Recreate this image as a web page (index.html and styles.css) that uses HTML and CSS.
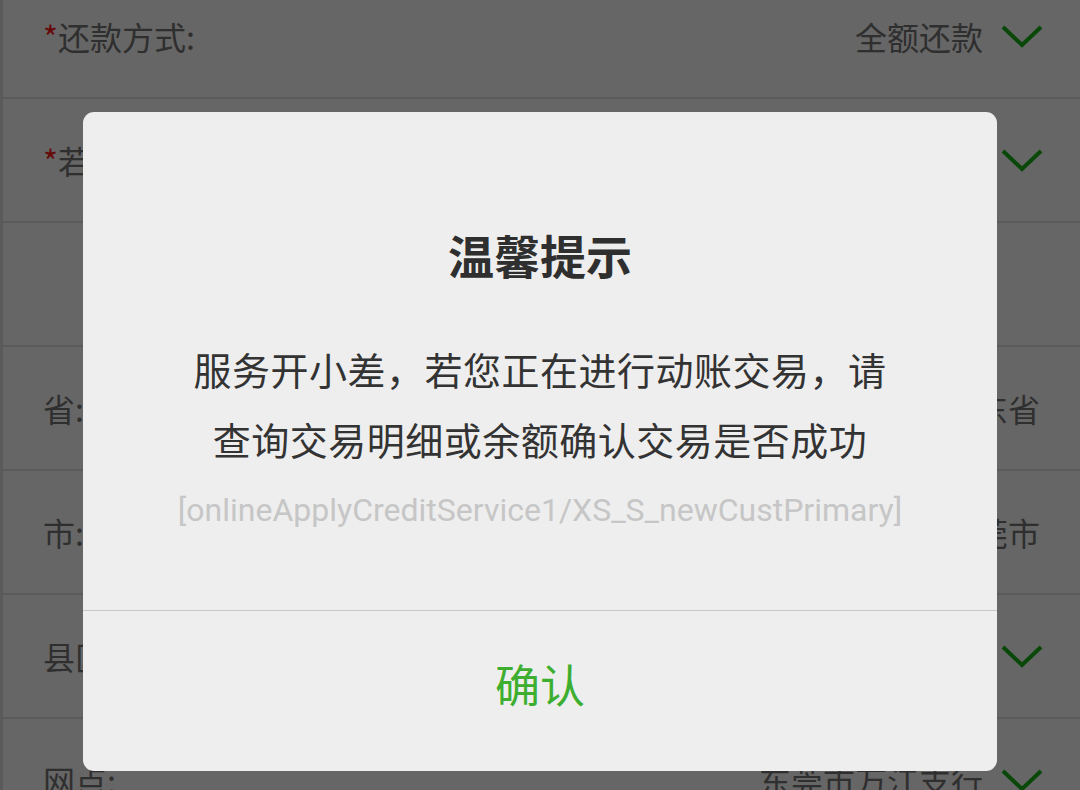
FILE: index.html
```html
<!DOCTYPE html>
<html lang="zh-CN">
<head>
<meta charset="utf-8">
<title>温馨提示</title>
<link rel="stylesheet" href="styles.css">
</head>
<body>
<div class="page">
  <ul class="form">
    <li class="row">
      <span class="label"><span class="req">*</span>还款方式:</span>
      <span class="value">全额还款</span>
      <svg class="chev" viewBox="0 0 42 23" width="42" height="23"><polyline points="2,2 21,20 40,2"/></svg>
    </li>
    <li class="row">
      <span class="label"><span class="req">*</span>若逾期还款:</span>
      <span class="value"></span>
      <svg class="chev" viewBox="0 0 42 23" width="42" height="23"><polyline points="2,2 21,20 40,2"/></svg>
    </li>
    <li class="row"></li>
    <li class="row">
      <span class="label">省:</span>
      <span class="value value-end">广东省</span>
    </li>
    <li class="row">
      <span class="label">市:</span>
      <span class="value value-end">东莞市</span>
    </li>
    <li class="row">
      <span class="label">县区:</span>
      <span class="value"></span>
      <svg class="chev" viewBox="0 0 42 23" width="42" height="23"><polyline points="2,2 21,20 40,2"/></svg>
    </li>
    <li class="row">
      <span class="label">网点:</span>
      <span class="value">东莞市万江支行</span>
      <svg class="chev" viewBox="0 0 42 23" width="42" height="23"><polyline points="2,2 21,20 40,2"/></svg>
    </li>
  </ul>
</div>
<div class="mask"></div>
<div class="dialog">
  <div class="dialog-body">
    <h2 class="dialog-title">温馨提示</h2>
    <p class="dialog-msg">服务开小差，若您正在进行动账交易，请查询交易明细或余额确认交易是否成功</p>
    <p class="dialog-code">[onlineApplyCreditService1/XS_S_newCustPrimary]</p>
  </div>
  <div class="dialog-foot">
    <span class="dialog-btn">确认</span>
  </div>
</div>
</body>
</html>
```
FILE: styles.css
```css
html, body {
  margin: 0;
  padding: 0;
}
body {
  width: 1080px;
  height: 790px;
  overflow: hidden;
  position: relative;
  background: #ffffff;
  font-family: "Noto Sans CJK SC", "Noto Sans", sans-serif;
}
.page {
  height: 790px;
  border-left: 3px solid #e0e0e0;
  box-sizing: border-box;
  overflow: hidden;
}
.form {
  list-style: none;
  margin: -25px 0 0 0;
  padding: 0;
}
.row {
  height: 124px;
  box-sizing: border-box;
  border-bottom: 2px solid #e4e4e4;
  display: flex;
  align-items: center;
  padding: 0 37px 0 40px;
  font-size: 32px;
  color: #757575;
  gap: 18px;
}
.label {
  flex: none;
}
.req {
  color: #ff1a1a;
}
.value {
  flex: 1;
  text-align: right;
}
.value-end {
  padding-right: 3px;
}
.chev {
  flex: none;
  fill: none;
  stroke: #17b417;
  stroke-width: 4;
}
.mask {
  position: absolute;
  inset: 0;
  background: rgba(0, 0, 0, 0.6);
}
.dialog {
  position: absolute;
  left: 83px;
  top: 112px;
  width: 914px;
  height: 659px;
  background: #eeeeee;
  border-radius: 11px;
  display: flex;
  flex-direction: column;
  overflow: hidden;
}
.dialog-body {
  padding: 114px 100px 0;
  height: 499px;
  box-sizing: border-box;
  border-bottom: 1px solid #c8c8c8;
  text-align: center;
}
.dialog-title {
  margin: 0;
  font-size: 46px;
  line-height: 56px;
  font-weight: bold;
  color: #2f2f2f;
}
.dialog-msg {
  margin: 52px 0 0;
  font-size: 38px;
  line-height: 70px;
  color: #333333;
  letter-spacing: 0.5px;
}
.dialog-code {
  margin: 16px -60px 0;
  font-family: Roboto, "Liberation Sans", sans-serif;
  font-size: 32px;
  line-height: 40px;
  color: #c6c6c6;
  white-space: nowrap;
}
.dialog-foot {
  flex: 1;
  display: flex;
  align-items: center;
  justify-content: center;
}
.dialog-btn {
  font-size: 45px;
  color: #3dae2f;
  padding-bottom: 16px;
}
```
